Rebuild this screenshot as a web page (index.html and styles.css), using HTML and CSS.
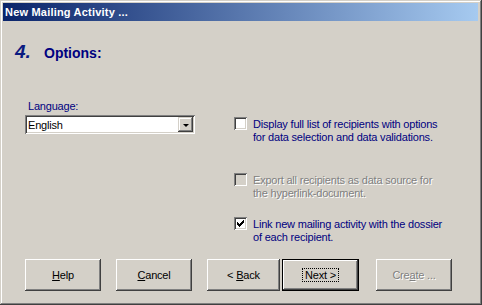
FILE: index.html
```html
<!DOCTYPE html>
<html lang="en">
<head>
    <meta charset="UTF-8">
    <title>New Mailing Activity</title>
    <link rel="stylesheet" href="styles.css">
</head>
<body>
    <div class="window">
        <div class="titlebar">New Mailing Activity ...</div>

        <div class="content">
            <!-- Paso actual -->
            <div class="heading">
                <span class="step">4.</span>
                <span class="step-title">Options:</span>
            </div>

            <div class="main">
                <div class="left-col">
                    <div class="label">Language:</div>
                    <div class="combo">
                        <span class="combo-text">English</span>
                        <span class="combo-btn"><span class="arrow"></span></span>
                    </div>
                </div>

                <div class="right-col">
                    <div class="check-row first">
                        <span class="checkbox"></span>
                        <span class="check-text">Display full list of recipients with options<br>for data selection and data validations.</span>
                    </div>
                    <div class="check-row disabled second">
                        <span class="checkbox"></span>
                        <span class="check-text">Export all recipients as data source for<br>the hyperlink-document.</span>
                    </div>
                    <div class="check-row third">
                        <span class="checkbox checked">
                            <svg width="7" height="7" viewBox="0 0 7 7"><path d="M0 2h1v1h1v1h1V3h1V2h1V1h1V0h1v3H6v1H5v1H4v1H3v1H2V6H1V5H0z" fill="#000"/></svg>
                        </span>
                        <span class="check-text">Link new mailing activity with the dossier<br>of each recipient.</span>
                    </div>
                </div>
            </div>

            <!-- Botones -->
            <div class="buttons">
                <button class="btn"><u>H</u>elp</button>
                <button class="btn"><u>C</u>ancel</button>
                <button class="btn back">&lt; <u>B</u>ack</button>
                <button class="btn default"><span class="focus">Next &gt;</span></button>
                <button class="btn create disabled">Cre<u>a</u>te ...</button>
            </div>
        </div>
    </div>
</body>
</html>
```

FILE: styles.css
```css
body {
    margin: 0;
    padding: 0;
    font-family: "Liberation Sans", Arial, sans-serif;
    font-size: 11px;
}

.window {
    width: 482px;
    height: 305px;
    box-sizing: border-box;
    padding: 3px;
    background-color: #d4d0c8;
    box-shadow: inset -1px -1px #404040, inset 1px 1px #d4d0c8,
                inset -2px -2px #808080, inset 2px 2px #ffffff;
    display: flex;
    flex-direction: column;
}

.titlebar {
    height: 18px;
    line-height: 18px;
    padding-left: 2px;
    margin-right: 1px;
    color: #ffffff;
    font-weight: bold;
    font-size: 11px;
    letter-spacing: 0.2px;
    background: linear-gradient(to right, #0a246a, #a6caf0);
}

.content {
    flex: 1;
    display: flex;
    flex-direction: column;
    color: #000080;
    letter-spacing: -0.2px;
}

.heading {
    display: flex;
    align-items: baseline;
    margin-top: 20px;
    padding-left: 12px;
    letter-spacing: 0;
}

.step {
    font-size: 19px;
    font-weight: bold;
    font-style: italic;
    color: #0a1a80;
    width: 29px;
}

.step-title {
    font-size: 14px;
    font-weight: bold;
}

.main {
    display: flex;
    margin-top: 37px;
}

.left-col {
    padding-left: 22px;
    width: 170px;
}

.label {
    padding-left: 3px;
    height: 15px;
}

.combo {
    height: 19px;
    box-sizing: border-box;
    background: #ffffff;
    box-shadow: inset 1px 1px #808080, inset -1px -1px #ffffff,
                inset 2px 2px #404040, inset -2px -2px #d4d0c8;
    display: flex;
    align-items: center;
    justify-content: space-between;
    padding: 2px;
    color: #000000;
}

.combo-text {
    padding-left: 1px;
}

.combo-btn {
    width: 15px;
    height: 15px;
    box-sizing: border-box;
    background: #d4d0c8;
    box-shadow: inset -1px -1px #404040, inset 1px 1px #d4d0c8,
                inset -2px -2px #808080, inset 2px 2px #ffffff;
    display: flex;
    align-items: center;
    justify-content: center;
}

.arrow {
    width: 0;
    height: 0;
    border-left: 3px solid transparent;
    border-right: 3px solid transparent;
    border-top: 3px solid #000000;
    margin-top: 1px;
}

.right-col {
    margin-left: 39px;
    padding-top: 17px;
}

.check-row {
    display: flex;
    align-items: flex-start;
    gap: 6px;
    line-height: 13px;
}

.second {
    margin-top: 29px;
}

.third {
    margin-top: 17px;
}

.checkbox {
    width: 13px;
    height: 13px;
    box-sizing: border-box;
    background: #ffffff;
    box-shadow: inset 1px 1px #808080, inset -1px -1px #ffffff,
                inset 2px 2px #404040, inset -2px -2px #d4d0c8;
    display: flex;
    align-items: center;
    justify-content: center;
    flex-shrink: 0;
}

.check-text {
    margin-top: 1px;
}

.check-row.disabled .checkbox {
    background: #d4d0c8;
}

.check-row.disabled .check-text {
    color: #808080;
    text-shadow: 1px 1px #ffffff;
}

.buttons {
    margin-top: auto;
    margin-bottom: 11px;
    display: flex;
    padding-left: 22px;
}

.btn {
    width: 76px;
    height: 32px;
    margin-right: 15px;
    padding: 0;
    border: none;
    background: #d4d0c8;
    font-family: "Liberation Sans", Arial, sans-serif;
    font-size: 11px;
    letter-spacing: -0.2px;
    color: #000000;
    box-shadow: inset -1px -1px #404040, inset 1px 1px #ffffff,
                inset -2px -2px #808080, inset 2px 2px #d4d0c8;
}

.btn.back {
    width: 73px;
    margin-right: 2px;
}

.btn.default {
    width: 77px;
    margin-right: 17px;
    box-shadow: inset 0 0 0 1px #000000, inset -2px -2px #404040, inset 2px 2px #ffffff,
                inset -3px -3px #808080;
}

.focus {
    border: 1px dotted #000000;
    padding: 0 2px;
}

.btn.disabled {
    color: #808080;
    text-shadow: 1px 1px #ffffff;
}
```
